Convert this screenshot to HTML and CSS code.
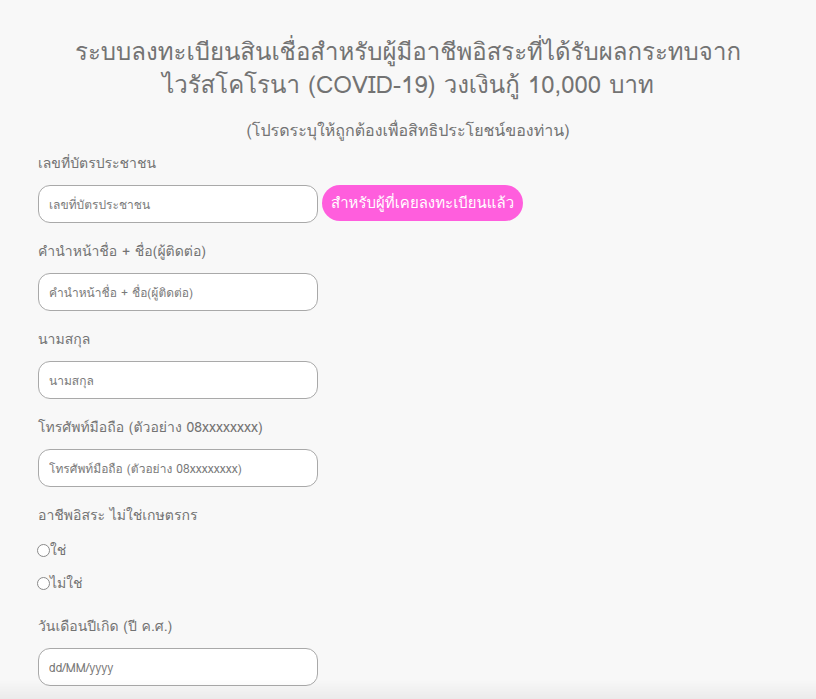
FILE: index.html
```html
<!DOCTYPE html>
<html lang="th">
<head>
<meta charset="utf-8">
<title>ลงทะเบียนสินเชื่อ</title>
<link rel="stylesheet" href="styles.css">
</head>
<body>
<div class="page">
  <h1 class="title">ระบบลงทะเบียนสินเชื่อสำหรับผู้มีอาชีพอิสระที่ได้รับผลกระทบจาก<br>ไวรัสโคโรนา (COVID-19) วงเงินกู้ 10,000 บาท</h1>
  <p class="subtitle">(โปรดระบุให้ถูกต้องเพื่อสิทธิประโยชน์ของท่าน)</p>
  <form class="form">
    <div class="field">
      <label class="label">เลขที่บัตรประชาชน</label>
      <div class="row">
        <input class="input" type="text" placeholder="เลขที่บัตรประชาชน">
        <button type="button" class="btn">สำหรับผู้ที่เคยลงทะเบียนแล้ว</button>
      </div>
    </div>
    <div class="field">
      <label class="label">คำนำหน้าชื่อ + ชื่อ(ผู้ติดต่อ)</label>
      <input class="input" type="text" placeholder="คำนำหน้าชื่อ + ชื่อ(ผู้ติดต่อ)">
    </div>
    <div class="field">
      <label class="label">นามสกุล</label>
      <input class="input" type="text" placeholder="นามสกุล">
    </div>
    <div class="field">
      <label class="label">โทรศัพท์มือถือ (ตัวอย่าง 08xxxxxxxx)</label>
      <input class="input" type="text" placeholder="โทรศัพท์มือถือ (ตัวอย่าง 08xxxxxxxx)">
    </div>
    <div class="field radios">
      <label class="label">อาชีพอิสระ ไม่ใช่เกษตรกร</label>
      <label class="radio"><span class="dot"></span>ใช่</label>
      <label class="radio"><span class="dot"></span>ไม่ใช่</label>
    </div>
    <div class="field">
      <label class="label">วันเดือนปีเกิด (ปี ค.ศ.)</label>
      <input class="input" type="text" placeholder="dd/MM/yyyy">
    </div>
  </form>
</div>
<div class="shade"></div>
</body>
</html>
```
FILE: styles.css
```css
html, body {
  margin: 0;
  padding: 0;
  background: #f8f8f8;
  font-family: Loma, Garuda, Tahoma, "Noto Sans", "DejaVu Sans", sans-serif;
  color: #737373;
}
.page {
  padding: 35px 38px 0 38px;
}
.title {
  margin: 0;
  text-align: center;
  font-size: 24px;
  font-weight: normal;
  line-height: 33px;
  color: #737373;
}
.subtitle {
  margin: 19px 0 0 0;
  text-align: center;
  font-size: 16px;
  line-height: 22px;
  color: #737373;
}
.form {
  margin-top: 10px;
  display: flex;
  flex-direction: column;
}
.field {
  display: flex;
  flex-direction: column;
  align-items: flex-start;
}
.label {
  font-size: 14px;
  line-height: 22px;
  margin-top: 0;
  height: 22px;
  margin-bottom: 11px;
  color: #737373;
}
.field + .field .label {
  margin-top: 17px;
}
.radios {
  margin-bottom: 4px;
}
.radios .label {
  margin-bottom: 13px;
}
.row {
  display: flex;
  align-items: flex-start;
  gap: 4px;
}
.input {
  box-sizing: border-box;
  width: 280px;
  height: 38px;
  border: 1px solid #a9a9a9;
  border-radius: 12px;
  background: #fff;
  padding: 0 10px;
  font-family: inherit;
  font-size: 12px;
  color: #555;
  outline: none;
}
.input::placeholder {
  color: #7a7a7a;
}
.btn {
  height: 36px;
  padding: 0 9px;
  border: none;
  border-radius: 18px;
  background: #ff5edd;
  color: #fff;
  font-family: inherit;
  font-size: 15px;
}
.radio {
  display: flex;
  align-items: center;
  font-size: 14px;
  line-height: 22px;
  height: 22px;
  margin-bottom: 11px;
  color: #737373;
}
.radio:last-child {
  margin-bottom: 0;
}
.dot {
  box-sizing: border-box;
  width: 13px;
  height: 13px;
  border: 1px solid #8a8a8a;
  border-radius: 50%;
  background: #fff;
  margin-left: -1px;
}
.shade {
  position: fixed;
  left: 0;
  right: 0;
  bottom: 0;
  height: 20px;
  background: linear-gradient(to bottom, rgba(0,0,0,0), rgba(0,0,0,0.05));
  pointer-events: none;
}
```
